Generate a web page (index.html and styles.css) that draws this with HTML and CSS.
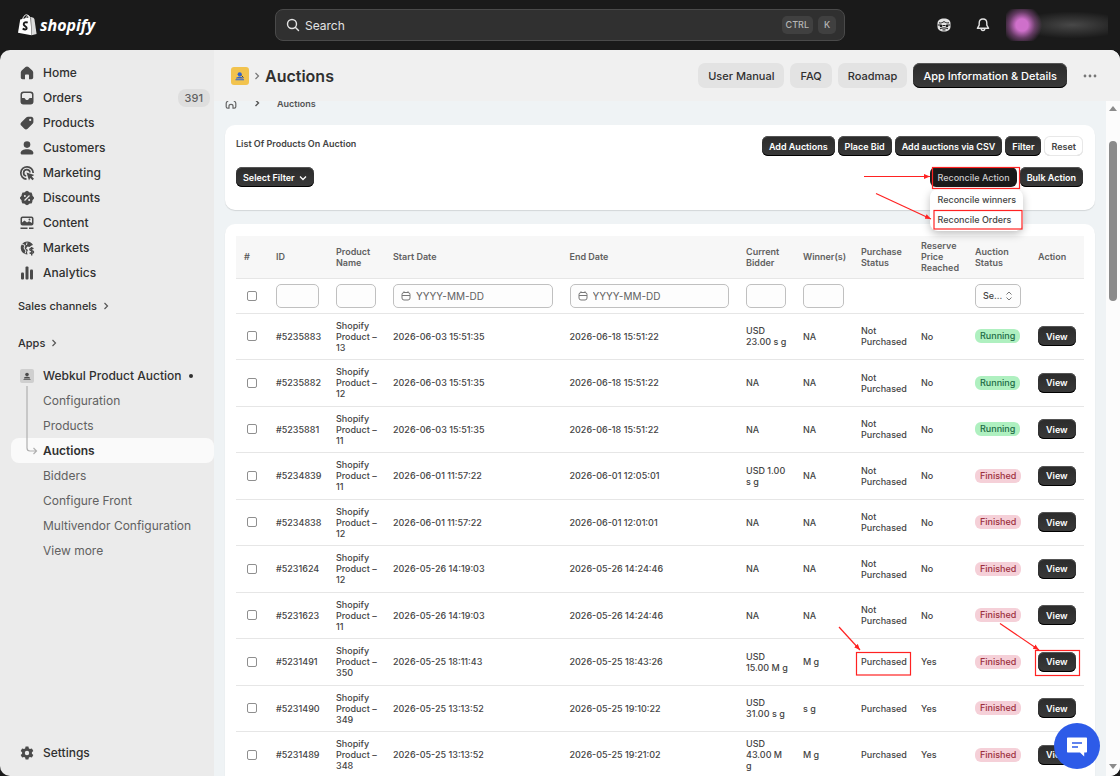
FILE: index.html
```html
<!DOCTYPE html>
<html lang="en">
<head>
    <meta charset="UTF-8">
    <meta name="viewport" content="width=device-width, initial-scale=1.0">
    <title>Auctions</title>
    <link rel="stylesheet" href="styles.css">
</head>
<body>
    <header class="topbar">
        <a class="logo" href="#">
            <svg width="19" height="22" viewBox="0 0 19 22"><path d="M2.2 5.6 12.4 3l1.1 18.3L0 18.8z" fill="#fff"/><path d="M13 3.1l2.4.6 1 1.4 2.2 14.9-5 1.3z" fill="#dcdcdc"/><path d="M4.5 6C5 2.8 6.800.8 8.600.8c1.700 0 2.500 1.700 2.500 4.200M7.500 5.300C8 2.900 9.300 1.600 10.300 1.700c1 .1 1.500 1 1.700 2" fill="none" stroke="#fff" stroke-width="1"/><path d="M9.700 8.700C7.900 7.800 5.700 8.500 5.700 10.200c0 2 3 2.100 3 4 0 1.600-2.300 1.700-4 .3" fill="none" stroke="#1a1a1a" stroke-width="1.900"/></svg>
            <span>shopify</span>
        </a>
        <label class="search">
            <svg width="14" height="14" viewBox="0 0 14 14" fill="none" stroke="#e3e3e3" stroke-width="1.400" stroke-linecap="round"><circle cx="6" cy="6" r="4.500"/><path d="M9.500 9.500 12.500 12.500"/></svg>
            <input type="text" placeholder="Search" aria-label="Search">
            <kbd>CTRL</kbd>
            <kbd>K</kbd>
        </label>
        <div class="top-right">
            <button class="icon-btn" aria-label="Sidekick">
                <svg width="16" height="16" viewBox="0 0 16 16"><path d="M8 1.500c3.800 0 6.500 1.800 6.500 5v3c0 3.200-2.700 5-6.500 5s-6.500-1.800-6.500-5v-3c0-3.200 2.700-5 6.500-5z" fill="#e3e3e3"/><path d="M3 5.800c2 .6 3.500-.3 5-1.200 1.800 1.200 3.500 1.600 5 1.200M2 8h3.500M10.500 8H14M6.500 8.500h3" fill="none" stroke="#1a1a1a"/><circle cx="5" cy="9" r="1.300" fill="#1a1a1a"/><circle cx="11" cy="9" r="1.300" fill="#1a1a1a"/><path d="M4 11.800c2.500-1.200 5.500-1.200 8 0M6.500 12.900h3" fill="none" stroke="#1a1a1a"/></svg>
            </button>
            <button class="icon-btn" aria-label="Notifications">
                <svg width="16" height="16" viewBox="0 0 16 16" fill="none" stroke="#e3e3e3" stroke-width="1.400" stroke-linejoin="round"><path d="M8 2C5.600 2 4.200 3.800 4.200 6v2.200L2.400 11.300h11.200L11.800 8.200V6C11.800 3.800 10.400 2 8 2zM6.200 11.500c0 1.300.7 2 1.800 2s1.800-.7 1.800-2"/></svg>
            </button>
            <div class="account"></div>
        </div>
    </header>

    <div class="frame">
        <nav class="sidebar">
            <ul class="nav">
                <li><a href="#"><svg viewBox="0 0 16 16"><path d="M8 1.500c.6 0 1.100.3 1.500.6l3.800 3.400c.6.5.9 1.200.9 2v5c0 1-.8 1.700-1.700 1.700H10v-3.700c0-.5-.4-1-1-1H7c-.6 0-1 .5-1 1v3.700H3.500c-1 0-1.700-.8-1.700-1.700v-5c0-.8.3-1.500.9-2l3.800-3.400c.4-.3.900-.6 1.500-.6z"/></svg>Home</a></li>
                <li><a href="#"><svg viewBox="0 0 16 16"><path fill-rule="evenodd" d="M4.500 1.500h7a3 3 0 0 1 3 3v7a3 3 0 0 1-3 3h-7a3 3 0 0 1-3-3v-7a3 3 0 0 1 3-3zM4.800 3c-1 0-1.800.8-1.800 1.800V8h2c.7 0 1 .4 1.300 1 .3.600.8 1 1.700 1s1.400-.4 1.700-1c.3-.6.600-1 1.300-1h2V4.800C13 3.800 12.200 3 11.200 3z"/></svg>Orders<span class="count">391</span></a></li>
                <li><a href="#"><svg viewBox="0 0 16 16"><path fill-rule="evenodd" d="M9 1.800h3.200c1.300 0 2.200 1 2.200 2.200v3c0 .7-.3 1.300-.8 1.800l-5 5c-.9.900-2.300.9-3.200 0L2.200 10.600c-.9-.9-.9-2.300 0-3.200l5-5C7.700 2 8.300 1.800 9 1.800zM11.200 6a1.100 1.100 0 1 0 0-2.200 1.100 1.100 0 0 0 0 2.200z"/></svg>Products</a></li>
                <li><a href="#"><svg viewBox="0 0 16 16"><circle cx="8" cy="4.600" r="3.300"/><path d="M8 9.300c3.500 0 6.400 1.600 6.400 3.700 0 1-.8 1.500-1.700 1.500H3.300c-.9 0-1.700-.5-1.700-1.500 0-2.100 2.900-3.700 6.400-3.700z"/></svg>Customers</a></li>
                <li><a href="#"><svg viewBox="0 0 16 16"><path d="M14.200 8A6.200 6.200 0 1 0 7.500 14.200M11 7.500A3.200 3.200 0 1 0 7.200 11" fill="none" stroke="#4a4a4a" stroke-width="1.700"/><path d="M7.500 7.500l7.800 2.500-2.600 1.400 2.300 2.400-1.500 1.500-2.300-2.300L10 15.500z"/></svg>Marketing</a></li>
                <li><a href="#"><svg viewBox="0 0 16 16"><path d="M6.500 1.500 8 .8l1.500.7 1.200 1 1.800.1.800 1.800.2 1.400L15 7.500v1l-1.500 1.700-.2 1.700-.8 1.500-1.800.2-1.200 1-1.500.6-1.500-.6-1.200-1-1.800-.2-.8-1.500-.2-1.700L1 8.500v-1l1.500-1.700.2-1.400.8-1.800 1.800-.1z"/><path d="M5.500 10.500l5-5" stroke="#ebebeb" stroke-width="1.300"/><circle cx="5.900" cy="6" r="1" fill="#ebebeb"/><circle cx="10.100" cy="10" r="1" fill="#ebebeb"/></svg>Discounts</a></li>
                <li><a href="#"><svg viewBox="0 0 16 16"><path fill-rule="evenodd" d="M3.500 1.500h9a2 2 0 0 1 2 2v5a2 2 0 0 1-2 2h-9a2 2 0 0 1-2-2v-5a2 2 0 0 1 2-2zM3 7.500l2.500-2 2.500 2 2-1.300 3 1.800V3.800c0-.5-.4-.8-.8-.8H3.800c-.5 0-.8.400-.8.800z"/><circle cx="10.500" cy="4.500" r="1"/><path d="M1.500 12.500h7v1.600h-7zM10 12.500h4.500v1.600H10z"/></svg>Content</a></li>
                <li><a href="#"><svg viewBox="0 0 16 16"><path d="M8 1.500a6.500 6.500 0 1 0 .5 13L8 12l1-2-2-1.500 1.500-2 2 .5 2-1.500 1.500-.5A6.500 6.500 0 0 0 8 1.500z"/><path d="M3 4l3 1.500L5 8l2 3-1 2.500M8 2.500 7.500 5" fill="none" stroke="#ebebeb"/><path d="M14.500 8.700c-1.500-1-3.700-.6-3.700.8 0 1.700 3.800.8 3.800 2.600 0 1.500-2.500 1.700-4 .5M12.700 7v8.500" fill="none" stroke="#4a4a4a" stroke-width="1.400"/></svg>Markets</a></li>
                <li><a href="#"><svg viewBox="0 0 16 16"><rect x="2" y="7.500" width="3" height="7" rx="1"/><rect x="6.500" y="1.500" width="3" height="13" rx="1"/><rect x="11" y="4.500" width="3" height="10" rx="1"/></svg>Analytics</a></li>
            </ul>
            <a class="section" href="#">Sales channels <svg viewBox="0 0 8 8"><path d="M2.500 1 5.500 4 2.500 7"/></svg></a>
            <a class="section apps" href="#">Apps <svg viewBox="0 0 8 8"><path d="M2.500 1 5.500 4 2.500 7"/></svg></a>
            <ul class="nav app-nav">
                <li><a href="#"><svg viewBox="0 0 16 16"><rect x="1" y="1" width="14" height="14" rx="2" fill="#cfcfcf"/><circle cx="8" cy="6.500" r="1.800"/><path d="M5 9.800c1-1.300 5-1.300 6 0v.7H5zM4.500 11h7v.8h-7z"/></svg>Webkul Product Auction<span class="dot"></span></a></li>
            </ul>
            <div class="sub">
                <svg class="branch" width="12" height="72" viewBox="0 0 12 72" fill="none" stroke="#b0b0b0" stroke-width="1.200"><path d="M1 0v62c0 2 1 3 3 3h6M7.500 62l3 3-3 3"/></svg>
                <a href="#">Configuration</a>
                <a href="#">Products</a>
                <a class="active" href="#">Auctions</a>
                <a href="#">Bidders</a>
                <a href="#">Configure Front</a>
                <a href="#">Multivendor Configuration</a>
                <a href="#">View more</a>
            </div>
            <ul class="nav settings">
                <li><a href="#"><svg viewBox="0 0 16 16"><path fill-rule="evenodd" d="M6.600 1.500h2.800l.5 1.900 1.100.6 1.900-.5 1.400 2.400L12.900 7.300v1.400l1.400 1.400-1.400 2.400-1.900-.5-1.100.6-.5 1.900H6.600l-.5-1.900L5 12l-1.900.5-1.400-2.400L3.100 8.700V7.300L1.700 5.900l1.400-2.400L5 4l1.100-.6zM8 10.200a2.200 2.200 0 1 0 0-4.400 2.200 2.200 0 0 0 0 4.400z"/></svg>Settings</a></li>
            </ul>
        </nav>

        <main class="main">
            <div class="page-head">
                <svg class="app-icon" width="18" height="18" viewBox="0 0 18 18"><rect width="18" height="18" rx="3" fill="#f2c34e"/><circle cx="8.700" cy="7.300" r="2.100" fill="#2e62d0"/><path d="M5 11.200c1-2 6-2 7.500 0v.4H5zM4.500 12.200h8.500v1H4.500z" fill="#2e62d0"/><path d="M10.500 8.500l2 2" stroke="#444" stroke-width="1"/></svg>
                <svg width="8" height="8" viewBox="0 0 8 8" fill="none" stroke="#777" stroke-width="1.200"><path d="M2.500 1 5.500 4 2.500 7"/></svg>
                <h1>Auctions</h1>
                <div class="head-actions">
                    <button class="grey-btn">User Manual</button>
                    <button class="grey-btn">FAQ</button>
                    <button class="grey-btn">Roadmap</button>
                    <button class="head-btn">App Information &amp; Details</button>
                    <button class="more" aria-label="More actions"><svg width="14" height="4" viewBox="0 0 14 4" fill="#777"><circle cx="2" cy="2" r="1.400"/><circle cx="7" cy="2" r="1.400"/><circle cx="12" cy="2" r="1.400"/></svg></button>
                </div>
            </div>

            <div class="view">
                <div class="content">
                    <div class="crumbs">
                        <svg width="12" height="12" viewBox="0 0 12 12" fill="none" stroke="#666" stroke-width="1.200"><path d="M4 11.200H2.700c-.8 0-1.500-.5-1.500-1.400V6.500c0-.8.300-1.300.8-1.800L4.800 2.200c.7-.6 1.700-.6 2.400 0L10 4.700c.5.500.8 1 .8 1.800v3.300c0 .9-.7 1.400-1.500 1.400H8V9c0-1-.8-1.700-2-1.700S4 8 4 9z"/></svg>
                        <svg width="8" height="8" viewBox="0 0 8 8" fill="none" stroke="#555" stroke-width="1.400"><path d="M2.500 1 5.500 4 2.500 7"/></svg>
                        <span>Auctions</span>
                    </div>

                    <section class="card tools">
                        <div class="tool-row">
                            <h2>List Of Products On Auction</h2>
                            <button class="btn">Add Auctions</button>
                            <button class="btn">Place Bid</button>
                            <button class="btn">Add auctions via CSV</button>
                            <button class="btn">Filter</button>
                            <button class="btn plain">Reset</button>
                        </div>
                        <div class="tool-row">
                            <button class="btn">Select Filter <svg width="8" height="6" viewBox="0 0 8 6" fill="none" stroke="#fff" stroke-width="1.300"><path d="M1 1.500 4 4.500 7 1.500"/></svg></button>
                            <div class="dropdown">
                                <button class="btn pressed">Reconcile Action</button>
                                <div class="menu">
                                    <button>Reconcile winners</button>
                                    <button>Reconcile Orders</button>
                                </div>
                            </div>
                            <button class="btn">Bulk Action</button>
                        </div>
                    </section>

                    <section class="card list">
                        <table>
                            <colgroup>
                                <col class="c-check"><col class="c-id"><col class="c-name"><col><col><col class="c-bidder"><col class="c-winner"><col class="c-purchase"><col class="c-reserve"><col class="c-status"><col class="c-action">
                            </colgroup>
                            <thead>
                                <tr><th>#</th><th>ID</th><th>Product Name</th><th>Start Date</th><th>End Date</th><th>Current Bidder</th><th>Winner(s)</th><th>Purchase Status</th><th>Reserve Price Reached</th><th>Auction Status</th><th>Action</th></tr>
                                <tr class="filters">
                                    <td><input type="checkbox" aria-label="Select all"></td>
                                    <td><input type="text" aria-label="ID"></td>
                                    <td><input type="text" aria-label="Product name"></td>
                                    <td><label class="date"><svg width="10" height="10" viewBox="0 0 10 10" fill="none" stroke="#777"><rect x="1" y="1.500" width="8" height="7.500" rx="2"/><path d="M1 4.500h8M3 .3v1.500M7 .3v1.500"/></svg><input type="text" placeholder="YYYY-MM-DD" aria-label="Start date"></label></td>
                                    <td><label class="date"><svg width="10" height="10" viewBox="0 0 10 10" fill="none" stroke="#777"><rect x="1" y="1.500" width="8" height="7.500" rx="2"/><path d="M1 4.500h8M3 .3v1.500M7 .3v1.500"/></svg><input type="text" placeholder="YYYY-MM-DD" aria-label="End date"></label></td>
                                    <td><input type="text" aria-label="Current bidder"></td>
                                    <td><input type="text" aria-label="Winner"></td>
                                    <td></td>
                                    <td></td>
                                    <td><div class="pick"><select aria-label="Auction status"><option>Se...</option></select><svg width="8" height="10" viewBox="0 0 8 10" fill="none" stroke="#777"><path d="M1.500 3.500 4 1 6.500 3.500M1.500 6.500 4 9 6.500 6.500"/></svg></div></td>
                                    <td></td>
                                </tr>
                            </thead>
                            <tbody>
                                <tr><td><input type="checkbox" aria-label="#5235883"></td><td>#5235883</td><td>Shopify Product – 13</td><td>2026-06-03 15:51:35</td><td>2026-06-18 15:51:22</td><td>USD 23.00 s g</td><td>NA</td><td>Not Purchased</td><td>No</td><td><span class="badge running">Running</span></td><td><button class="btn">View</button></td></tr>
                                <tr><td><input type="checkbox" aria-label="#5235882"></td><td>#5235882</td><td>Shopify Product – 12</td><td>2026-06-03 15:51:35</td><td>2026-06-18 15:51:22</td><td>NA</td><td>NA</td><td>Not Purchased</td><td>No</td><td><span class="badge running">Running</span></td><td><button class="btn">View</button></td></tr>
                                <tr><td><input type="checkbox" aria-label="#5235881"></td><td>#5235881</td><td>Shopify Product – 11</td><td>2026-06-03 15:51:35</td><td>2026-06-18 15:51:22</td><td>NA</td><td>NA</td><td>Not Purchased</td><td>No</td><td><span class="badge running">Running</span></td><td><button class="btn">View</button></td></tr>
                                <tr><td><input type="checkbox" aria-label="#5234839"></td><td>#5234839</td><td>Shopify Product – 11</td><td>2026-06-01 11:57:22</td><td>2026-06-01 12:05:01</td><td>USD 1.00 s g</td><td>NA</td><td>Not Purchased</td><td>No</td><td><span class="badge finished">Finished</span></td><td><button class="btn">View</button></td></tr>
                                <tr><td><input type="checkbox" aria-label="#5234838"></td><td>#5234838</td><td>Shopify Product – 12</td><td>2026-06-01 11:57:22</td><td>2026-06-01 12:01:01</td><td>NA</td><td>NA</td><td>Not Purchased</td><td>No</td><td><span class="badge finished">Finished</span></td><td><button class="btn">View</button></td></tr>
                                <tr><td><input type="checkbox" aria-label="#5231624"></td><td>#5231624</td><td>Shopify Product – 12</td><td>2026-05-26 14:19:03</td><td>2026-05-26 14:24:46</td><td>NA</td><td>NA</td><td>Not Purchased</td><td>No</td><td><span class="badge finished">Finished</span></td><td><button class="btn">View</button></td></tr>
                                <tr><td><input type="checkbox" aria-label="#5231623"></td><td>#5231623</td><td>Shopify Product – 11</td><td>2026-05-26 14:19:03</td><td>2026-05-26 14:24:46</td><td>NA</td><td>NA</td><td>Not Purchased</td><td>No</td><td><span class="badge finished">Finished</span></td><td><button class="btn">View</button></td></tr>
                                <tr><td><input type="checkbox" aria-label="#5231491"></td><td>#5231491</td><td>Shopify Product – 350</td><td>2026-05-25 18:11:43</td><td>2026-05-25 18:43:26</td><td>USD 15.00 M g</td><td>M g</td><td>Purchased</td><td>Yes</td><td><span class="badge finished">Finished</span></td><td><button class="btn">View</button></td></tr>
                                <tr><td><input type="checkbox" aria-label="#5231490"></td><td>#5231490</td><td>Shopify Product – 349</td><td>2026-05-25 13:13:52</td><td>2026-05-25 19:10:22</td><td>USD 31.00 s g</td><td>s g</td><td>Purchased</td><td>Yes</td><td><span class="badge finished">Finished</span></td><td><button class="btn">View</button></td></tr>
                                <tr><td><input type="checkbox" aria-label="#5231489"></td><td>#5231489</td><td>Shopify Product – 348</td><td>2026-05-25 13:13:52</td><td>2026-05-25 19:21:02</td><td>USD 43.00 M g</td><td>M g</td><td>Purchased</td><td>Yes</td><td><span class="badge finished">Finished</span></td><td><button class="btn">View</button></td></tr>
                            </tbody>
                        </table>
                    </section>
                </div>
                <div class="scrollbar">
                    <svg width="8" height="5" viewBox="0 0 8 5" fill="#8b8b8b"><path d="M0 5 4 0l4 5z"/></svg>
                    <div class="thumb"></div>
                    <svg width="8" height="5" viewBox="0 0 8 5" fill="#8b8b8b"><path d="M0 0h8L4 5z"/></svg>
                </div>
            </div>
        </main>
    </div>

    <button class="chat" aria-label="Chat">
        <svg width="22" height="22" viewBox="0 0 22 22"><path d="M2 2.500h18c.6 0 1 .4 1 1v13c0 .6-.4 1-1 1h-1.800V21.500L14 17.500H2c-.6 0-1-.4-1-1v-13c0-.6.4-1 1-1z" fill="#fff"/><path d="M6 8h10M6 12h6" stroke="#2d5be8" stroke-width="1.600"/></svg>
    </button>

    <!-- callouts -->
    <svg class="marks" width="280" height="700" viewBox="840 0 280 700" fill="none" stroke="#f22" stroke-width="1.200">
        <defs><marker id="tip" viewBox="0 0 6 6" refX="6" refY="3" markerWidth="5" markerHeight="5" orient="auto"><path d="M0 0.500 6 3 0 5.500z" fill="#f22" stroke="none"/></marker></defs>
        <rect x="932.500" y="167.500" width="87" height="21"/>
        <rect x="934" y="210.500" width="88" height="18.500"/>
        <rect x="856.500" y="652.500" width="54" height="22.500"/>
        <rect x="1035.500" y="650.500" width="44" height="25"/>
        <path d="M864 176.500h66" marker-end="url(#tip)"/>
        <path d="M876 193.500 931 219" marker-end="url(#tip)"/>
        <path d="M839 627 860 650" marker-end="url(#tip)"/>
        <path d="M1000 623.500 1039 650" marker-end="url(#tip)"/>
    </svg>
</body>
</html>
```
FILE: styles.css
```css
* {
    box-sizing: border-box;
}
body {
    margin: 0;
    height: 100vh;
    display: flex;
    flex-direction: column;
    position: relative;
    overflow: hidden;
    background: #1a1a1a;
    color: #303030;
    font-family: Inter, "Liberation Sans", sans-serif;
    font-size: 12px;
}
button, input, select {
    font-family: inherit;
    margin: 0;
}
a {
    color: inherit;
    text-decoration: none;
}
ul {
    list-style: none;
    margin: 0;
    padding: 0;
}

/* top bar */
.topbar {
    height: 50px;
    flex: none;
    display: grid;
    grid-template-columns: 1fr minmax(0, 570px) 1fr;
    align-items: center;
}
.logo {
    display: flex;
    align-items: center;
    gap: 3px;
    padding-left: 18px;
    color: #fff;
    font: italic bold 16px "Open Sans", sans-serif;
}
.search {
    height: 32px;
    display: flex;
    align-items: center;
    gap: 5px;
    padding: 0 8px 0 10px;
    border: 1px solid #4a4a4a;
    border-radius: 8px;
    background: #303030;
}
.search input {
    flex: 1;
    min-width: 0;
    padding: 0;
    border: 0;
    outline: 0;
    background: none;
    color: #e3e3e3;
    font-size: 12px;
}
.search input::placeholder {
    color: #e3e3e3;
    opacity: 1;
}
kbd {
    min-width: 18px;
    padding: 0 4px;
    border-radius: 5px;
    background: #404040;
    color: #b5b5b5;
    font: 500 9px/18px Inter, sans-serif;
    text-align: center;
}
.top-right {
    display: flex;
    align-items: center;
    justify-content: flex-end;
    gap: 15px;
    padding-right: 12px;
}
.icon-btn {
    display: flex;
    padding: 4px;
    border: 0;
    background: none;
}
.account {
    width: 102px;
    height: 32px;
    margin-left: -4px;
    background: radial-gradient(circle at 16px 16px, #cf70cb 6px, rgba(150, 80, 148, .6) 13px, transparent 20px), radial-gradient(ellipse at 66px 16px, #484848, #1a1a1a 60%), #1a1a1a;
}

/* frame */
.frame {
    flex: 1;
    min-height: 0;
    display: flex;
    border-radius: 10px;
    overflow: hidden;
    background: #ebebeb;
}
.sidebar {
    width: 214px;
    flex: none;
    display: flex;
    flex-direction: column;
    padding: 10px 0 11px;
    color: #303030;
}
.nav a {
    display: flex;
    align-items: center;
    gap: 8px;
    height: 25px;
    padding: 0 4px 0 19px;
    font-weight: 500;
}
.nav svg {
    width: 16px;
    height: 16px;
    fill: #4a4a4a;
}
.count {
    margin-left: auto;
    padding: 0 7px;
    border-radius: 8px;
    background: #dedede;
    color: #616161;
    font-size: 11px;
    line-height: 18px;
}
.section {
    display: flex;
    align-items: center;
    gap: 5px;
    height: 20px;
    margin-top: 11px;
    padding-left: 18px;
    font-size: 11px;
    font-weight: 500;
}
.section svg {
    width: 8px;
    height: 8px;
    fill: none;
    stroke: #555;
    stroke-width: 1.2;
}
.apps {
    margin-top: 17px;
}
.app-nav {
    margin-top: 10px;
}
.dot {
    width: 4px;
    height: 4px;
    border-radius: 50%;
    background: #303030;
}
.sub {
    position: relative;
    display: flex;
    flex-direction: column;
    color: #616161;
}
.sub a {
    height: 25px;
    margin-left: 11px;
    padding-left: 32px;
    border-radius: 8px;
    line-height: 25px;
}
.sub .active {
    background: #fafafa;
    color: #303030;
    font-weight: 600;
}
.branch {
    position: absolute;
    left: 26px;
    top: -2px;
}
.settings {
    margin-top: auto;
}

.main {
    flex: 1;
    min-width: 0;
    display: flex;
    flex-direction: column;
    background: #eff3f5;
}
.page-head {
    height: 51px;
    flex: none;
    display: flex;
    align-items: center;
    gap: 4px;
    padding: 0 23px 0 17px;
    background: #f0f0f0;
}
h1 {
    flex: 1;
    margin: 0;
    font-size: 16px;
    font-weight: 600;
}
.head-actions {
    display: flex;
    align-items: center;
    gap: 6px;
}
.grey-btn, .head-btn {
    height: 25px;
    padding: 0 10px;
    border: 0;
    border-radius: 7px;
    background: #e3e3e3;
    color: #303030;
    font-size: 11px;
    font-weight: 500;
}
.head-btn, .btn {
    background: linear-gradient(#2b2b2b, #3a3a3a);
    color: #fff;
    box-shadow: inset 0 1px 0 #555, inset 0 -1px 0 #000;
}
.more {
    display: flex;
    margin-left: 10px;
    padding: 0;
    border: 0;
    background: none;
}

.view {
    flex: 1;
    min-height: 0;
    display: flex;
    overflow: hidden;
}
.content {
    flex: 1;
    min-width: 0;
    margin-top: -6px;
    padding: 0 11px;
}
.crumbs {
    display: flex;
    align-items: center;
    height: 16px;
    gap: 16px;
    color: #555;
    font-size: 9px;
    font-weight: 600;
}
.card {
    border-radius: 10px;
    background: #fff;
    box-shadow: 0 1px 1px rgba(0, 0, 0, .12);
}
.tools {
    display: flex;
    flex-direction: column;
    gap: 11px;
    height: 85px;
    margin-top: 14px;
    padding: 11px 12px 0 11px;
}
.tool-row {
    display: flex;
    align-items: center;
    gap: 3px;
}
h2 {
    margin: 0 auto 6px 0;
    color: #444;
    font-size: 9px;
    font-weight: 600;
}
.btn {
    height: 20px;
    padding: 0 7px;
    border: 0;
    border-radius: 6px;
    font-size: 9px;
    font-weight: 600;
}
.btn svg {
    margin-left: 2px;
}
.plain {
    background: #fff;
    color: #444;
    box-shadow: inset 0 0 0 1px #e8e8e8, inset 0 -1px 0 #ccc;
}
.pressed {
    background: #1a1a1a;
    color: #ccc;
    font-weight: 500;
    box-shadow: none;
}
.dropdown {
    position: relative;
    margin-left: auto;
}
.menu {
    position: absolute;
    top: 22px;
    left: 0;
    z-index: 1;
    display: flex;
    flex-direction: column;
    padding-bottom: 2px;
    border-radius: 8px;
    background: #fff;
    box-shadow: 0 3px 8px rgba(0, 0, 0, .25);
}
.menu button {
    height: 20px;
    padding: 0 7px;
    border: 0;
    background: none;
    color: #444;
    font-size: 9px;
    font-weight: 500;
    text-align: left;
    white-space: nowrap;
}

/* auctions table */
.list {
    margin-top: 14px;
    padding: 12px 11px;
}
table {
    width: 100%;
    table-layout: fixed;
    border-collapse: collapse;
    color: #444;
    font-size: 9px;
    font-weight: 500;
    line-height: 11px;
}
.c-check { width: 32px; }
.c-id { width: 60px; }
.c-name { width: 57px; }
.c-bidder { width: 57px; }
.c-winner { width: 58px; }
.c-purchase { width: 60px; }
.c-reserve { width: 54px; }
.c-status { width: 63px; }
.c-action { width: 54px; }
th, td {
    padding: 0 8px;
    border-bottom: 1px solid #e6e6e6;
    text-align: left;
}
th {
    height: 42px;
    background: #f7f7f7;
    color: #616161;
    font-weight: 600;
}
.filters td {
    height: 35px;
    padding-right: 9px;
}
tbody tr {
    height: 46px;
}
tbody tr:nth-child(even) {
    height: 47px;
}
tbody td {
    padding-right: 7px;
}
td:first-child {
    padding: 0 0 0 11px;
}
td:last-child {
    padding-right: 0;
}
td .btn {
    padding: 0 8px;
}
input[type=checkbox] {
    appearance: none;
    display: block;
    width: 10px;
    height: 10px;
    border: 1px solid #8f8f8f;
    border-radius: 2px;
    background: #fff;
}
.filters input[type=text], .date, .pick {
    display: flex;
    align-items: center;
    width: 100%;
    height: 24px;
    border: 1px solid #c0c0c0;
    border-radius: 5px;
    background: #fdfdfd;
}
.date {
    gap: 5px;
    padding: 0 7px;
}
.filters .date input {
    flex: 1;
    min-width: 0;
    height: 20px;
    padding: 0;
    border: 0;
    background: none;
    font-size: 10px;
}
.date input::placeholder {
    color: #616161;
    opacity: 1;
}
.pick {
    padding: 0 7px;
}
.pick select {
    appearance: none;
    flex: 1;
    min-width: 0;
    padding: 0;
    border: 0;
    background: none;
    color: #444;
    font-size: 9px;
    font-weight: 500;
}
.badge {
    display: inline-block;
    padding: 0 5px;
    border-radius: 6px;
    line-height: 14px;
}
.running {
    background: #aff0c0;
    color: #1c6b45;
}
.finished {
    background: #f5d0d8;
    color: #9c2f3c;
}

.scrollbar {
    width: 14px;
    display: flex;
    flex-direction: column;
    align-items: center;
    padding: 5px 0 7px;
    background: #fcfcfc;
}
.thumb {
    width: 8px;
    height: 160px;
    margin: 30px 0 auto;
    border-radius: 4px;
    background: #8b8b8b;
}
.chat {
    position: absolute;
    right: 20px;
    bottom: 7px;
    width: 46px;
    height: 46px;
    padding: 0;
    border: 0;
    border-radius: 50%;
    background: #2d5be8;
    display: flex;
    align-items: center;
    justify-content: center;
}
.marks {
    position: absolute;
    top: 0;
    right: 0;
    z-index: 2;
    pointer-events: none;
    overflow: visible;
}
```
